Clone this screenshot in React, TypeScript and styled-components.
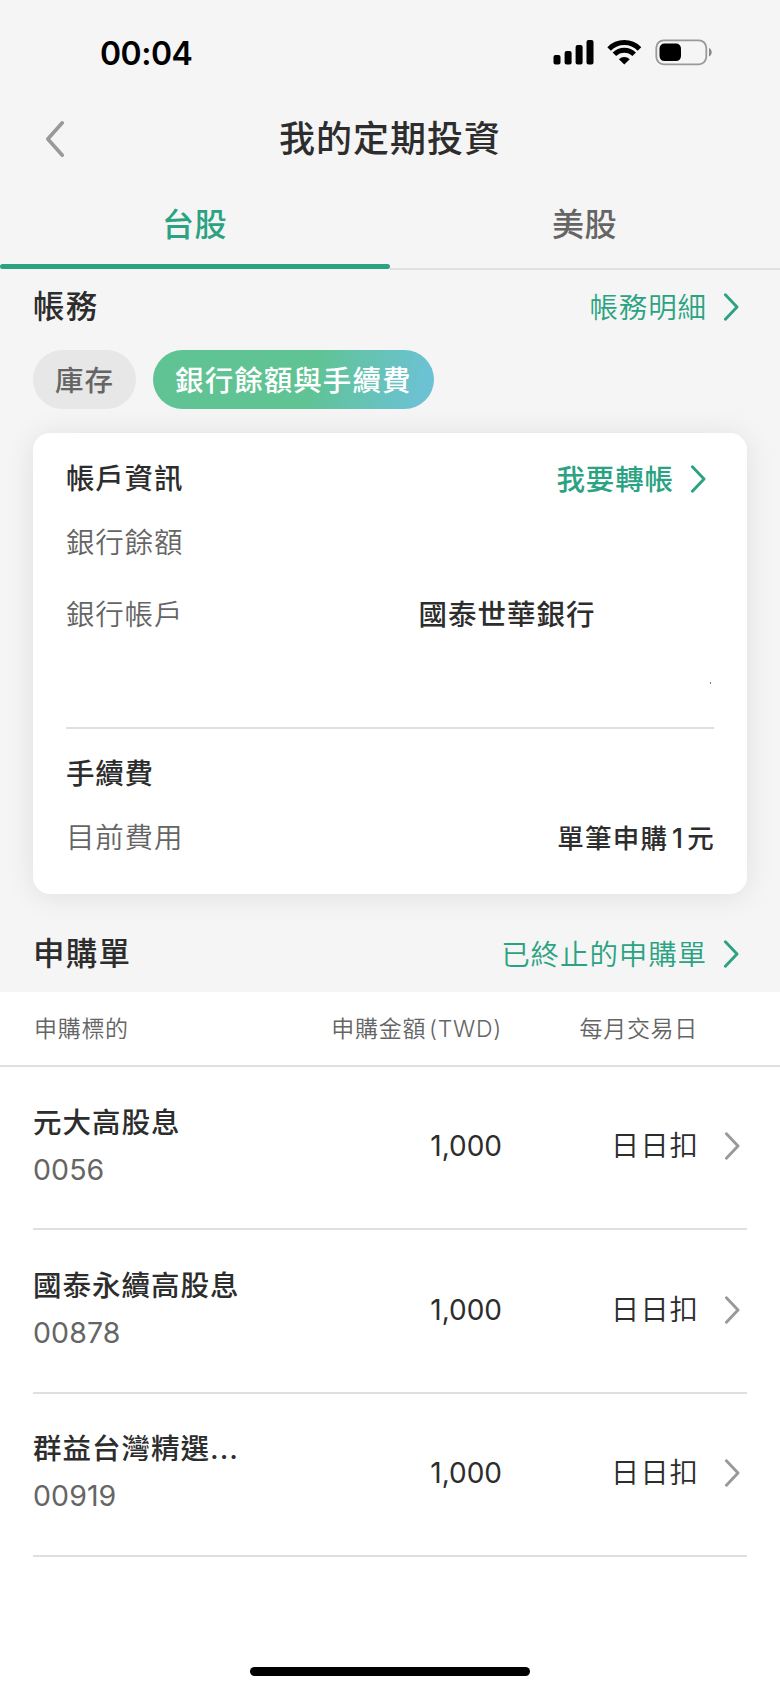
import React from "react";
import styled, { createGlobalStyle } from "styled-components";

const GREEN = "#2ba383";
const INK = "#2d2d2d";
const MUTED = "#656565";
const LINE = "#e0e0e0";

const GlobalStyle = createGlobalStyle`
  * { box-sizing: border-box; }
  html, body { margin: 0; background: #fff; }
  body {
    font-family: Inter, "Noto Sans CJK TC", sans-serif;
    color: ${INK};
    -webkit-font-smoothing: antialiased;
  }
  h1, h2, h3, p { margin: 0; }
  button { font: inherit; border: 0; background: none; padding: 0; }
`;

const Screen = styled.div`
  width: 780px;
  height: 1691px;
  display: flex;
  flex-direction: column;
  background: #fff;
  overflow: hidden;
  white-space: nowrap;
`;

const Upper = styled.div`
  height: 992px;
  flex: none;
  background: #f5f5f5;
  display: flex;
  flex-direction: column;
`;

const StatusBar = styled.header`
  height: 104px;
  flex: none;
  display: flex;
  justify-content: space-between;
  padding: 0 68px 0 100px;
`;

const Clock = styled.span`
  font-size: 32px;
  line-height: 40px;
  font-weight: 600;
  color: #000;
  letter-spacing: -0.5px;
  margin-top: 34px;
`;

const StatusIcons = styled.svg`
  display: block;
  margin-top: 36px;
`;

const NavBar = styled.div`
  height: 68px;
  flex: none;
  display: grid;
  grid-template-columns: 110px 1fr 110px;
  align-items: center;
`;

const BackButton = styled.button`
  display: flex;
  padding-left: 45px;
`;

const PageTitle = styled.h1`
  font-size: 36px;
  line-height: 70px;
  font-weight: 500;
  letter-spacing: 1px;
  text-align: center;
`;

const Tabs = styled.nav`
  height: 98px;
  flex: none;
  display: flex;
`;

const Tab = styled.button<{ $active?: boolean }>`
  flex: 1;
  position: relative;
  font-size: 32px;
  line-height: 106px;
  font-weight: 500;
  letter-spacing: 0.6px;
  padding-right: 1px;
  color: ${(p) => (p.$active ? GREEN : MUTED)};
  border-bottom: ${(p) => (p.$active ? "0" : `2px solid ${LINE}`)};

  &::after {
    content: "";
    display: ${(p) => (p.$active ? "block" : "none")};
    position: absolute;
    left: 0;
    right: 0;
    bottom: 1px;
    height: 5px;
    border-radius: 3px;
    background: ${GREEN};
  }
`;

const SectionHead = styled.div<{ $height: number; $top?: number }>`
  height: ${(p) => p.$height}px;
  padding: ${(p) => p.$top ?? 0}px 41px 0 33px;
  display: flex;
  align-items: center;
  justify-content: space-between;
  flex: none;
`;

const SectionTitle = styled.h2`
  font-size: 31.5px;
  line-height: 44px;
  font-weight: 500;
  letter-spacing: 1.2px;
`;

const LinkButton = styled.button<{ $strong?: boolean }>`
  display: flex;
  align-items: center;
  gap: 16px;
  font-size: 28.5px;
  line-height: 41px;
  letter-spacing: 0.9px;
  font-weight: ${(p) => (p.$strong ? 500 : 350)};
  color: ${GREEN};
`;

const Chips = styled.div`
  display: flex;
  gap: 17px;
  padding: 6px 33px 0;
  height: 89px;
  flex: none;
`;

const Chip = styled.button<{ $active?: boolean }>`
  height: 59px;
  padding: 0 22px;
  border-radius: 30px;
  font-size: 28.5px;
  line-height: 61px;
  font-weight: 500;
  letter-spacing: 1.05px;
  color: ${(p) => (p.$active ? "#fff" : MUTED)};
  background: ${(p) =>
    p.$active ? "linear-gradient(105deg, #5fc393 0%, #5fc393 55%, #6cc2d3 94%)" : "#e7e7e7"};
`;

const Card = styled.section`
  margin: 0 33px;
  height: 461px;
  flex: none;
  background: #fff;
  border-radius: 17px;
  box-shadow: 0 2px 30px rgba(0, 0, 0, 0.09);
  padding: 17px 33px 0;
  line-height: 40px;
`;

const CardRow = styled.div<{ $height: number; $end?: number }>`
  height: ${(p) => p.$height}px;
  padding-right: ${(p) => p.$end ?? 0}px;
  display: flex;
  align-items: center;
  justify-content: space-between;
`;

const CardTitle = styled.h3`
  font-size: 28.5px;
  font-weight: 500;
  letter-spacing: 0.8px;
`;

const Label = styled.span`
  font-size: 28.5px;
  font-weight: 350;
  letter-spacing: 0.8px;
  color: ${MUTED};
`;

const BankName = styled.span`
  width: 295.5px;
  font-size: 28.5px;
  font-weight: 500;
  letter-spacing: 1px;
`;

const Fee = styled.span`
  font-size: 26.5px;
  font-weight: 500;
  letter-spacing: 1.2px;
  margin-right: -1px;
`;

const FeeNumber = styled.span`
  margin: 0 3px 0 4px;
`;

const AccountLine = styled.div`
  height: 75px;
  display: flex;
  justify-content: flex-end;
  padding: 30px 3px 0 0;
`;

const Speck = styled.i`
  width: 1px;
  height: 2px;
  background: #777;
`;

const Divider = styled.hr`
  margin: 0 0 2px;
  border: 0;
  height: 2px;
  background: ${LINE};
`;

const Columns = styled.div`
  display: grid;
  grid-template-columns: 250px 219px 196px 1fr;
  align-items: center;
  padding: 0 33px;
`;

const TableHead = styled(Columns)`
  height: 75px;
  flex: none;
  padding-top: 1px;
  border-bottom: 2px solid ${LINE};
  font-size: 23px;
  line-height: 30px;
  font-weight: 350;
  letter-spacing: 0.7px;
  color: ${MUTED};
`;

const HeadCell = styled.span<{ $end?: boolean }>`
  text-align: ${(p) => (p.$end ? "right" : "left")};
  padding-left: ${(p) => (p.$end ? 0 : 1)}px;
`;

const Currency = styled.span`
  margin-left: 3px;
`;

const OrderRow = styled(Columns)`
  height: 163.4px;
  flex: none;
  padding: 0 0 3px;
  margin: 0 33px;
  border-bottom: 2px solid ${LINE};
`;

const Stock = styled.div`
  display: flex;
  flex-direction: column;
`;

const StockName = styled.span`
  font-size: 28.5px;
  line-height: 46px;
  font-weight: 500;
  letter-spacing: 1px;
`;

const StockCode = styled.span`
  font-size: 28.5px;
  line-height: 47px;
  font-weight: 380;
  letter-spacing: 0.1px;
  color: ${MUTED};
`;

const Amount = styled.span`
  font-size: 28px;
  line-height: 40px;
  text-align: right;
`;

const TradeDay = styled.span`
  font-size: 28.5px;
  line-height: 42px;
  font-weight: 350;
  text-align: right;
  letter-spacing: 0.9px;
  margin-right: -1px;
`;

const RowArrow = styled.span`
  display: flex;
  justify-content: flex-end;
  padding-right: 7px;
`;

const HomeArea = styled.footer`
  margin-top: auto;
  height: 28px;
  display: flex;
  justify-content: center;
`;

const HomeIndicator = styled.div`
  width: 280px;
  height: 9px;
  margin-top: 4px;
  border-radius: 5px;
  background: #000;
`;

const Chevron = ({ color }: { color: string }) => (
  <svg width="16" height="30" viewBox="0 0 16 30" fill="none">
    <path d="M2.4 2.8 14 15 2.4 27.2" stroke={color} strokeWidth="2.9" strokeLinecap="round" strokeLinejoin="round" />
  </svg>
);

const BackChevron = () => (
  <svg width="20" height="38" viewBox="0 0 20 38" fill="none">
    <path d="M17.3 2.8 2.8 19 17.3 35.2" stroke="#999" strokeWidth="3.6" strokeLinecap="round" strokeLinejoin="round" />
  </svg>
);

const orders = [
  { name: "元大高股息", code: "0056", amount: "1,000", day: "日日扣" },
  { name: "國泰永續高股息", code: "00878", amount: "1,000", day: "日日扣" },
  { name: "群益台灣精選...", code: "00919", amount: "1,000", day: "日日扣" },
];

export default function App() {
  return (
    <>
      <GlobalStyle />
      <Screen>
        <Upper>
          <StatusBar>
            <Clock>00:04</Clock>
            <StatusIcons width="160" height="32" viewBox="0 0 160 32">
              <rect x="1.5" y="19" width="7" height="9.5" rx="2" />
              <rect x="12.6" y="15" width="7" height="13.5" rx="2" />
              <rect x="23.6" y="9" width="7" height="19.5" rx="2" />
              <rect x="34.5" y="4" width="7" height="24.5" rx="2" />
              <g fill="none" stroke="#000" strokeWidth="5">
                <path d="M57.1 12.9a21.5 21.5 0 0 1 30.4 0" />
                <path d="M62.4 18.3a14 14 0 0 1 19.8 0" />
              </g>
              <path d="M72.3 28.6 66.9 23.2a7.6 7.6 0 0 1 10.8 0z" />
              <rect x="104.3" y="4.3" width="50" height="24" rx="7.5" fill="none" stroke="#999" strokeWidth="1.8" />
              <rect x="107.5" y="7.5" width="21.5" height="17.6" rx="5" />
              <path d="M157 12v8.4c3.6-1.4 3.6-7 0-8.4z" fill="#888" />
            </StatusIcons>
          </StatusBar>
          <NavBar>
            <BackButton aria-label="返回">
              <BackChevron />
            </BackButton>
            <PageTitle>我的定期投資</PageTitle>
          </NavBar>
          <Tabs>
            <Tab $active>台股</Tab>
            <Tab>美股</Tab>
          </Tabs>
          <SectionHead $height={74}>
            <SectionTitle>帳務</SectionTitle>
            <LinkButton>
              帳務明細
              <Chevron color={GREEN} />
            </LinkButton>
          </SectionHead>
          <Chips>
            <Chip>庫存</Chip>
            <Chip $active>銀行餘額與手續費</Chip>
          </Chips>
          <Card>
            <CardRow $height={58} $end={8}>
              <CardTitle>帳戶資訊</CardTitle>
              <LinkButton $strong>
                我要轉帳
                <Chevron color={GREEN} />
              </LinkButton>
            </CardRow>
            <CardRow $height={70}>
              <Label>銀行餘額</Label>
            </CardRow>
            <CardRow $height={74}>
              <Label>銀行帳戶</Label>
              <BankName>國泰世華銀行</BankName>
            </CardRow>
            <AccountLine>
              <Speck />
            </AccountLine>
            <Divider />
            <CardRow $height={86}>
              <CardTitle>手續費</CardTitle>
            </CardRow>
            <CardRow $height={42}>
              <Label>目前費用</Label>
              <Fee>
                單筆申購<FeeNumber>1</FeeNumber>元
              </Fee>
            </CardRow>
          </Card>
          <SectionHead $height={98} $top={22}>
            <SectionTitle>申購單</SectionTitle>
            <LinkButton>
              已終止的申購單
              <Chevron color={GREEN} />
            </LinkButton>
          </SectionHead>
        </Upper>
        <TableHead>
          <HeadCell>申購標的</HeadCell>
          <HeadCell $end>
            申購金額<Currency>(TWD)</Currency>
          </HeadCell>
          <HeadCell $end>每月交易日</HeadCell>
        </TableHead>
        {orders.map((o) => (
          <OrderRow key={o.code}>
            <Stock>
              <StockName>{o.name}</StockName>
              <StockCode>{o.code}</StockCode>
            </Stock>
            <Amount>{o.amount}</Amount>
            <TradeDay>{o.day}</TradeDay>
            <RowArrow>
              <Chevron color="#999" />
            </RowArrow>
          </OrderRow>
        ))}
        <HomeArea>
          <HomeIndicator />
        </HomeArea>
      </Screen>
    </>
  );
}
